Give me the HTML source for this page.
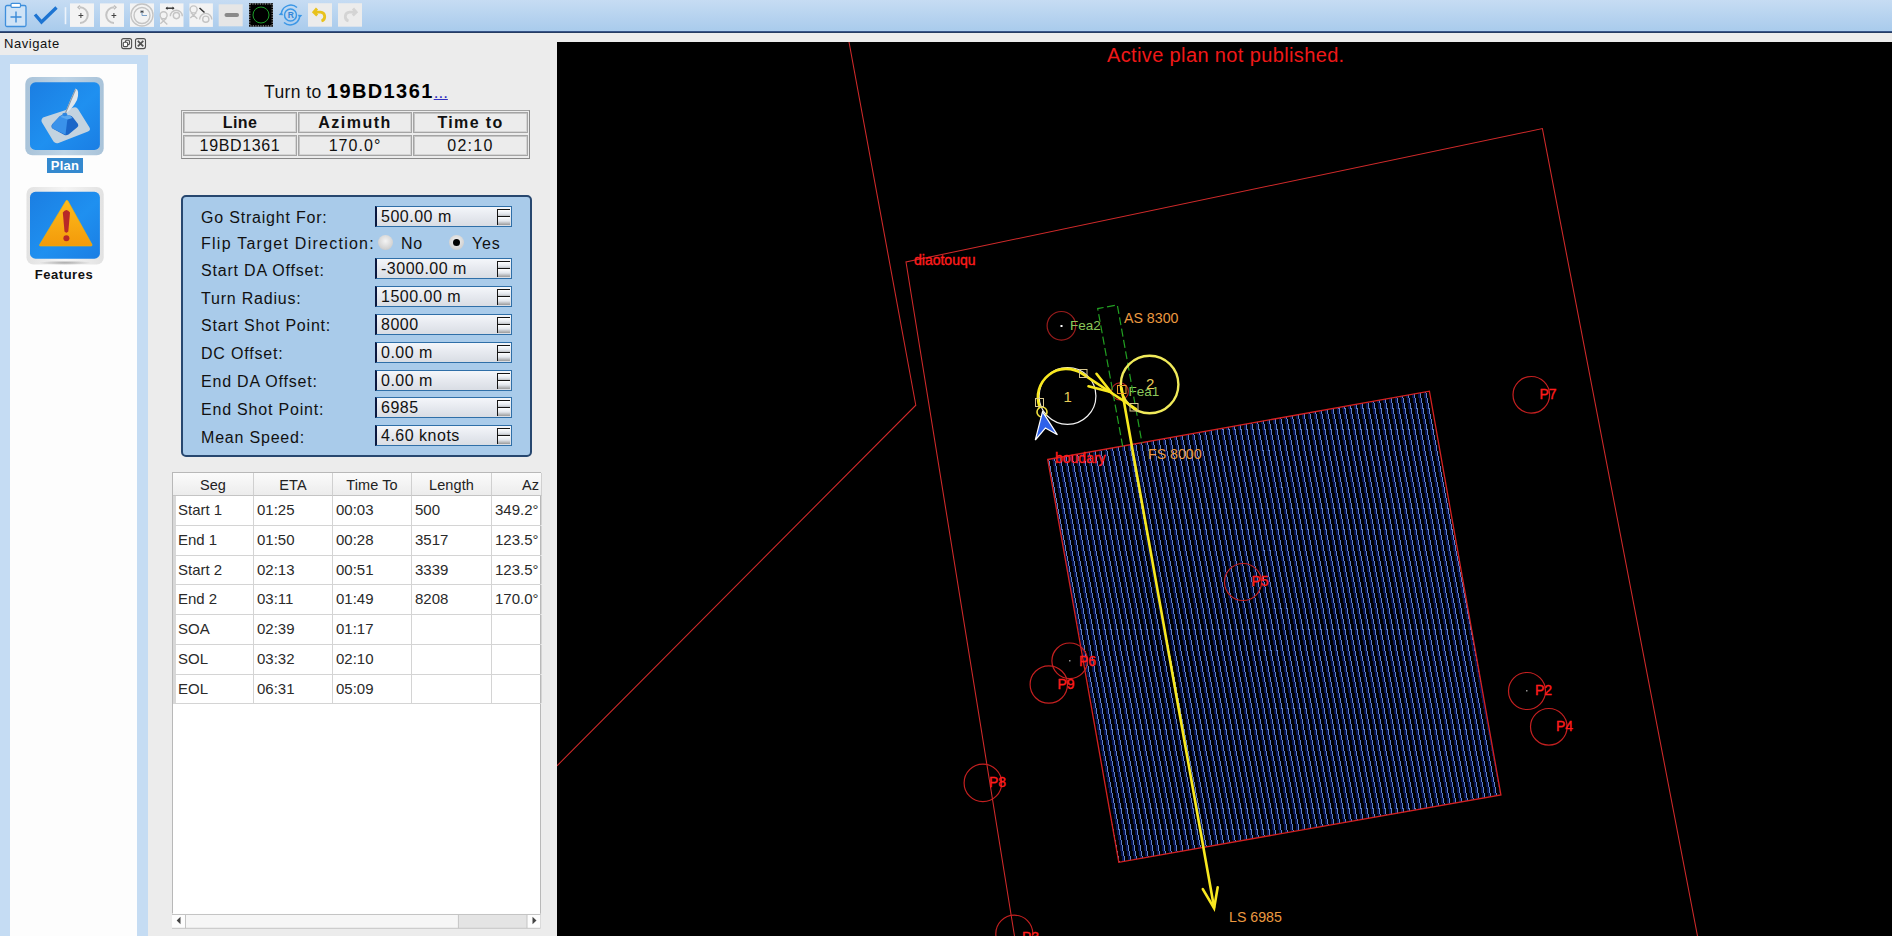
<!DOCTYPE html>
<html><head><meta charset="utf-8"><title>Navigate</title>
<style>
*{box-sizing:border-box;margin:0;padding:0}
html,body{width:1892px;height:936px;overflow:hidden;background:#ececec;font-family:"Liberation Sans",sans-serif;color:#000}
.a{position:absolute}
#tb{left:0;top:0;width:1892px;height:31px;background:linear-gradient(#c6dcf3,#a9cbec);border-bottom:0}
#tbl{left:0;top:31px;width:1892px;height:2px;background:linear-gradient(#40609a,#1c3050)}
.tbtn{position:absolute;top:3px;width:24px;height:24px;background:#f2f2f2}
#navt{left:4px;top:36px;font-size:13px;letter-spacing:0.55px;color:#111}
#side{left:0;top:55px;width:148px;height:881px;background:#c5dcf3}
#sidew{left:10px;top:64px;width:127px;height:872px;background:#fdfdfd}
.ico{position:absolute;left:25px;width:79px;height:79px;border-radius:7px;background:linear-gradient(#b8cfe3,#a6bfd8)}
.ico .in{position:absolute;left:4px;top:5px;width:71px;height:68px;border-radius:6px;background:linear-gradient(160deg,#1b7fe3,#1f8eef 60%,#1a80e4)}
#plabel{left:47px;top:158px;width:36px;height:15px;background:#3489cf;color:#fff;font-weight:bold;font-size:13px;line-height:15px;text-align:center;letter-spacing:0.3px}
#flabel{left:30px;top:267px;width:68px;text-align:center;font-weight:bold;font-size:13px;letter-spacing:0.55px;color:#111}
#map{left:557px;top:42px;width:1335px;height:894px;background:#000}
#turn{left:264px;top:80px;width:300px;text-align:left;white-space:nowrap}
#turn .t1{font-size:17.5px;letter-spacing:0.4px;color:#111}
#turn .t2{font-size:20px;font-weight:bold;letter-spacing:1.4px}
#turn .t3{font-size:17px;color:#3030c0;text-decoration:underline}
#ltab{left:181px;top:110px;width:349px;height:49px;border:1px solid #a0a0a0;border-right-color:#888;border-bottom-color:#888}
.lc{position:absolute;border:1px solid #a4a4a4;box-shadow:inset 1px 1px 0 #c4c4c4,inset -1px -1px 0 #d4d4d4;text-align:center;font-size:16px;letter-spacing:0.65px;color:#111}
.lc.h{font-weight:bold;letter-spacing:0.4px}
#grp{left:181px;top:195px;width:351px;height:262px;border:2px solid #27476f;border-radius:5px;background:#a9cbea}
.lbl{position:absolute;left:201px;font-size:16px;letter-spacing:0.8px;color:#111}
.spin{position:absolute;left:375px;width:137px;height:21px;border:1px solid #2f6fa8;border-left:2px solid #0a1840;background:linear-gradient(#f4f6fa,#e6e9ef 50%,#d9dde4);font-size:16px;letter-spacing:0.5px;padding-left:4px;line-height:19px;color:#111}
.spin .sb{position:absolute;right:2px;top:2px;width:12.5px;height:15px}
.spin .sb:before,.spin .sb:after{content:"";position:absolute;left:0;width:12.5px;height:7.5px;border-top:1.2px solid #151515;border-left:1.3px solid #151515;background:linear-gradient(#fff,#e2e6ec 50%,#9a9a9a)}
.spin .sb:before{top:0}.spin .sb:after{top:7.3px}
.radio{position:absolute;top:235px;width:15px;height:15px;border-radius:50%;background:radial-gradient(circle at 50% 40%,#f4f4f4,#d0d0d0 70%,#b8b8b8)}
#stab{left:172px;top:472px;width:369px;height:456px;border:1px solid #b8b8b8;background:#fff}
.sh{position:absolute;top:0;height:23.3px;background:linear-gradient(#fbfbfb,#ececec);border-right:1px solid #d0d0d0;border-bottom:1px solid #c4c4c4;text-align:center;font-size:14.5px;line-height:24.5px;letter-spacing:0.1px;color:#222}
.sr{position:absolute;left:2px;width:366px;height:29.73px;border-bottom:1px solid #d4d4d4}
.sc{position:absolute;top:0;height:28.73px;border-right:1px solid #d4d4d4;font-size:15px;line-height:28.9px;padding-left:3px;letter-spacing:0;color:#2a2a2a}
#hsb{left:172px;top:913px;width:369px;height:15px;border-top:1px solid #c0c0c0;background:linear-gradient(#fff,#f4f4f4)}

</style></head><body>
<div id="tb" class="a"></div>
<div id="tbl" class="a"></div>
<svg class="a" style="left:0;top:0" width="370" height="31" viewBox="0 0 370 31">
<g>
<rect x="5.5" y="5.5" width="20.5" height="21" rx="1.5" fill="#cfe3f6" stroke="#3f8fdc" stroke-width="1.3"/>
<rect x="11" y="3.3" width="9.5" height="4" rx="1" fill="#fff" stroke="#3f8fdc" stroke-width="1.2"/>
<path d="M16 11.5V22.5M10.5 17H21.5" stroke="#3a8ad8" stroke-width="1.4"/>
</g>
<path d="M35 14.5L41.5 22L56.5 7.5" fill="none" stroke="#1d74d2" stroke-width="3.3"/>
<rect x="64.7" y="7.2" width="1.6" height="17" fill="#edf3fb"/>
<rect x="70" y="3.4" width="24" height="23.5" fill="#f3f3f3"/>
<rect x="100" y="3.4" width="24" height="23.5" fill="#f3f3f3"/>
<rect x="130" y="3.4" width="24" height="23.5" fill="#f3f3f3"/>
<rect x="160" y="3.4" width="23.5" height="23.5" fill="#f3f3f3"/>
<rect x="189.4" y="3.4" width="23.5" height="23.5" fill="#f3f3f3"/>
<g fill="none" stroke="#c4c4c4" stroke-width="1.4">
<path d="M80 7.3A7.7 7.7 0 1 1 80 22.9" stroke-width="2"/>
<path d="M114 7.3A7.7 7.7 0 1 0 114 22.9" stroke-width="2"/>
<circle cx="142" cy="15" r="11"/>
<circle cx="142" cy="15.5" r="8"/>
<circle cx="163.6" cy="15.3" r="3.5"/><path d="M160.8 18.3L167.3 24.5M166.4 18.3L160.3 23.8M170.3 16.3A6 6 0 0 1 182.3 16.3"/><circle cx="176.4" cy="15.6" r="3.1"/>
<circle cx="193.6" cy="9.4" r="3.5"/><path d="M190.8 12.4L197.3 18.8M196.4 12.4L190.3 18M199.6 19.5A6 6 0 0 1 211.8 19.5"/><circle cx="205.8" cy="19.2" r="3.1"/>
</g>
<path d="M80 5.5L78 7.3L80 9.2M114 5.5L116 7.3L114 9.2" fill="none" stroke="#bdbdbd" stroke-width="1.4"/>
<path d="M78.5 15.5h4.8M80.9 13v5M111.5 15.5h4.8M113.9 13v5" stroke="#444" stroke-width="1"/>
<path d="M142 15.5V10.5M142 15.5H147" stroke="#7aa0c8" stroke-width="1"/>
<path d="M141 10.5V13M143 10.5V13M141 11.5H143" stroke="#333" stroke-width="0.8"/>
<path d="M166.5 8.2H173.5" stroke="#333" stroke-width="1.4"/><path d="M165.5 8.2L167.5 6.5V10ZM174.5 8.2L172.5 6.5V10Z" fill="#333"/>
<path d="M199.5 8L204.5 12.5" stroke="#333" stroke-width="1.5"/>
<rect x="218.7" y="4.3" width="24" height="22" fill="#e6e6e6"/>
<rect x="224.5" y="13" width="14.5" height="4" rx="2" fill="#8a8a8a"/>
<rect x="249" y="3.2" width="24" height="23.5" fill="#000"/>
<rect x="249.8" y="4" width="22.4" height="21.9" fill="none" stroke="#ddd" stroke-width="0.8" stroke-dasharray="1.2,1.3"/>
<circle cx="261" cy="15" r="8" fill="none" stroke="#1c9c28" stroke-width="1"/>
<g fill="none" stroke="#3b97e6" stroke-width="1.5">
<circle cx="290.5" cy="15" r="6"/>
<path d="M281.5 12.5A9.5 9.5 0 0 1 297 7.5M299.5 17.5A9.5 9.5 0 0 1 284 22.5"/>
</g>
<path d="M278.7 15l3-3.5l1.4 3.8zM302.3 15l-3 3.5l-1.4-3.8z" fill="#3b97e6"/>
<text x="287.7" y="18.4" font-family="Liberation Sans" font-weight="bold" font-size="8.5" fill="#2f86d8">R</text>
<rect x="308" y="3.2" width="24" height="23.5" fill="#ececec"/>
<path d="M317 8.5L313.8 12.2L317.2 15.5M314.5 12.2H320.5A4.5 4.5 0 0 1 321.5 21" fill="none" stroke="#e8c21c" stroke-width="2.8"/>
<rect x="338" y="3.2" width="24" height="23.5" fill="#ececec"/>
<path d="M353 8.5L356.2 12.2L352.8 15.5M355.5 12.2H349.5A4.5 4.5 0 0 0 348.5 21" fill="none" stroke="#d4d4d4" stroke-width="2.8"/>
</svg>
<div id="navt" class="a">Navigate</div>
<svg class="a" style="left:115px;top:33px" width="35" height="20" viewBox="115 33 35 20">
<g fill="none" stroke="#505050" stroke-width="1.1">
<rect x="121.6" y="38.6" width="10" height="10" rx="2"/>
<rect x="135.5" y="38.6" width="10" height="10" rx="2"/>
<rect x="125.5" y="40.3" width="4" height="4.3" rx="1"/>
<rect x="123.3" y="42.3" width="4.3" height="4.3" rx="1" fill="#fff"/>
</g>
<path d="M137.8 40.9L143.3 46.3M143.3 40.9L137.8 46.3" stroke="#505050" stroke-width="1.7"/>
</svg>
<div id="side" class="a"></div>
<div id="sidew" class="a"></div>
<svg class="a" style="left:20px;top:70px" width="90" height="200" viewBox="20 70 90 200">
<defs>
<linearGradient id="fr" x1="0" x2="1"><stop offset="0" stop-color="#a9c3d9"/><stop offset="0.5" stop-color="#bed4e6"/><stop offset="1" stop-color="#a9c3d9"/></linearGradient>
<linearGradient id="fr2" x1="0" x2="1"><stop offset="0" stop-color="#e2e2e2"/><stop offset="0.5" stop-color="#f4f4f4"/><stop offset="1" stop-color="#e2e2e2"/></linearGradient>
<radialGradient id="sh" cx="0.5" cy="0.5" r="0.5"><stop offset="0" stop-color="#a8a8a8"/><stop offset="1" stop-color="#a8a8a8" stop-opacity="0"/></radialGradient>
<linearGradient id="bl" x1="0" y1="0" x2="1" y2="1"><stop offset="0" stop-color="#1b7ee2"/><stop offset="0.55" stop-color="#1f90f0"/><stop offset="1" stop-color="#1a7ee4"/></linearGradient>
<linearGradient id="or" x1="0" y1="0" x2="0" y2="1"><stop offset="0" stop-color="#fdbb1c"/><stop offset="1" stop-color="#f39a0a"/></linearGradient>
</defs>
<rect x="25.3" y="77" width="78.4" height="78.2" rx="7" fill="url(#fr)"/>
<rect x="30" y="82.3" width="69.9" height="67.6" rx="5.5" fill="url(#bl)"/>
<path d="M43 117.5Q40.5 120 42 122.5L53.5 141.5Q55.5 144 58.5 143L88 131.5Q91 130 89.5 127.5L78 109Q76.5 106.5 73.5 107.5Z" fill="#c3d3e0"/>
<path d="M75.5 88.5Q80 90 77 100Q73 108 67 112.5L66 111Q70 100 75.5 88.5Z" fill="#dfe6ec"/>
<path d="M75.5 89.5L65.5 113" stroke="#8a98a6" stroke-width="1.1"/>
<path d="M51.5 127Q51 125.5 52.5 124L59.5 116.5Q61 115 63 115L70 115.5Q72 116 73 117.5L78 124Q79 126 77 127.5L68.5 134.5Q66.5 135.8 64.5 135L53 128.8Q51.7 128 51.5 127Z" fill="#1a66c8"/>
<path d="M52.5 124L59.5 116.5Q61 115 63 115L67.5 118.5L65.5 134.8L53 128.8Q51.3 127.5 52.5 124Z" fill="#3a92ea"/>
<path d="M60.5 117L63 115L70 115.5L72.5 118L67.5 119.5Z" fill="#5aa8f0"/>
<ellipse cx="64.8" cy="114.5" rx="2.6" ry="1.8" fill="#2e86e0"/>
<rect x="26.5" y="187" width="77.2" height="77.6" rx="7" fill="url(#fr2)"/>
<ellipse cx="65" cy="262.8" rx="26" ry="2.2" fill="url(#sh)"/>
<rect x="30" y="191.8" width="69.9" height="66.9" rx="5.5" fill="url(#bl)"/>
<path d="M66.1 200.5Q67 200 68 201L92 244.5Q92.5 246 91 246H40.5Q39 246 39.7 244.5Z" fill="url(#or)" stroke="#f5b400" stroke-width="0.6"/>
<path d="M62.8 212.5Q66.3 207.5 70 212.5L68.3 231.5Q66.3 233.8 64.5 231.5Z" fill="#b82828"/>
<circle cx="66.4" cy="238.2" r="3" fill="#b82828"/>
</svg>
<div id="plabel" class="a">Plan</div>
<div id="flabel" class="a">Features</div>

<div id="turn" class="a"><span class="t1">Turn to </span><span class="t2">19BD1361</span><span class="t3">...</span></div>
<div id="ltab" class="a"></div>
<div class="lc h" style="left:183px;top:112px;width:114px;height:21px;line-height:20.8px">Line</div>
<div class="lc h" style="left:298px;top:112px;width:114px;height:21px;line-height:20.8px;letter-spacing:1.5px">Azimuth</div>
<div class="lc h" style="left:413px;top:112px;width:115px;height:21px;line-height:20.8px;letter-spacing:1.35px">Time to</div>
<div class="lc" style="left:183px;top:135px;width:114px;height:21px;line-height:20.8px">19BD1361</div>
<div class="lc" style="left:298px;top:135px;width:114px;height:21px;line-height:20.8px;letter-spacing:1.05px">170.0°</div>
<div class="lc" style="left:413px;top:135px;width:115px;height:21px;line-height:20.8px;letter-spacing:1.3px">02:10</div>

<div id="grp" class="a"></div>
<div class="lbl" style="top:208.5px">Go Straight For:</div>
<div class="lbl" style="top:234.5px;letter-spacing:1.25px">Flip Target Direction:</div>
<div class="lbl" style="top:261.5px">Start DA Offset:</div>
<div class="lbl" style="top:289.5px">Turn Radius:</div>
<div class="lbl" style="top:316.5px">Start Shot Point:</div>
<div class="lbl" style="top:344.5px">DC Offset:</div>
<div class="lbl" style="top:372.5px">End DA Offset:</div>
<div class="lbl" style="top:400.5px">End Shot Point:</div>
<div class="lbl" style="top:428.5px">Mean Speed:</div>
<div class="spin" style="top:206px">500.00 m<div class="sb"></div></div>
<div class="radio" style="left:378px"></div>
<div class="lbl" style="left:401px;top:234.5px">No</div>
<div class="radio" style="left:449px"><div style="position:absolute;left:4px;top:4px;width:7px;height:7px;border-radius:50%;background:#000"></div></div>
<div class="lbl" style="left:472px;top:234.5px">Yes</div>
<div class="spin" style="top:258px">-3000.00 m<div class="sb"></div></div>
<div class="spin" style="top:286px">1500.00 m<div class="sb"></div></div>
<div class="spin" style="top:314px">8000<div class="sb"></div></div>
<div class="spin" style="top:342px">0.00 m<div class="sb"></div></div>
<div class="spin" style="top:370px">0.00 m<div class="sb"></div></div>
<div class="spin" style="top:397px">6985<div class="sb"></div></div>
<div class="spin" style="top:425px">4.60 knots<div class="sb"></div></div>

<div id="stab" class="a">
<div class="sh" style="left:0;width:81px">Seg</div>
<div class="sh" style="left:81px;width:79px">ETA</div>
<div class="sh" style="left:160px;width:79px">Time To</div>
<div class="sh" style="left:239px;width:80px">Length</div>
<div class="sh" style="left:319px;width:50px;text-align:right;padding-right:2px">Az</div>
<div style="position:absolute;left:0;top:23.3px;width:2.5px;height:208px;background:#d8d8d8"></div>
<div class="sr" style="top:23.30px"><div class="sc" style="left:0px;width:79px">Start 1</div><div class="sc" style="left:79px;width:79px">01:25</div><div class="sc" style="left:158px;width:79px">00:03</div><div class="sc" style="left:237px;width:80px">500</div><div class="sc" style="left:317px;width:50px">349.2°</div></div>
<div class="sr" style="top:53.03px"><div class="sc" style="left:0px;width:79px">End 1</div><div class="sc" style="left:79px;width:79px">01:50</div><div class="sc" style="left:158px;width:79px">00:28</div><div class="sc" style="left:237px;width:80px">3517</div><div class="sc" style="left:317px;width:50px">123.5°</div></div>
<div class="sr" style="top:82.76px"><div class="sc" style="left:0px;width:79px">Start 2</div><div class="sc" style="left:79px;width:79px">02:13</div><div class="sc" style="left:158px;width:79px">00:51</div><div class="sc" style="left:237px;width:80px">3339</div><div class="sc" style="left:317px;width:50px">123.5°</div></div>
<div class="sr" style="top:112.49px"><div class="sc" style="left:0px;width:79px">End 2</div><div class="sc" style="left:79px;width:79px">03:11</div><div class="sc" style="left:158px;width:79px">01:49</div><div class="sc" style="left:237px;width:80px">8208</div><div class="sc" style="left:317px;width:50px">170.0°</div></div>
<div class="sr" style="top:142.22px"><div class="sc" style="left:0px;width:79px">SOA</div><div class="sc" style="left:79px;width:79px">02:39</div><div class="sc" style="left:158px;width:79px">01:17</div><div class="sc" style="left:237px;width:80px"></div><div class="sc" style="left:317px;width:50px"></div></div>
<div class="sr" style="top:171.95px"><div class="sc" style="left:0px;width:79px">SOL</div><div class="sc" style="left:79px;width:79px">03:32</div><div class="sc" style="left:158px;width:79px">02:10</div><div class="sc" style="left:237px;width:80px"></div><div class="sc" style="left:317px;width:50px"></div></div>
<div class="sr" style="top:201.68px"><div class="sc" style="left:0px;width:79px">EOL</div><div class="sc" style="left:79px;width:79px">06:31</div><div class="sc" style="left:158px;width:79px">05:09</div><div class="sc" style="left:237px;width:80px"></div><div class="sc" style="left:317px;width:50px"></div></div>

</div>
<svg class="a" style="left:172px;top:913px" width="369" height="16" viewBox="172 913 369 16">
<rect x="172" y="913.5" width="368.5" height="15" fill="#fdfdfd"/>
<rect x="186" y="914.5" width="272" height="13.5" fill="#f6f6f6"/>
<rect x="458.4" y="914.5" width="68.6" height="13.5" fill="#e4e4e4"/>
<path d="M172 914.5H540.5M185.5 914.5V928.3M458.4 914.5V928.3M527 914.5V928.3M172 928.3H540.5" stroke="#c4c4c4" stroke-width="1"/>
<path d="M176.7 920.5L180.5 916.8V924.2Z" fill="#444"/>
<path d="M536.5 920.5L532.5 916.8V924.2Z" fill="#444"/>
</svg>

<svg id="map" class="a" width="1335" height="894" viewBox="557 42 1335 894">
<defs><clipPath id="hc"><polygon points="1047.7,459.5 1429.4,391.2 1500.9,794.9 1118.8,862.3"/></clipPath></defs>
<g fill="none" stroke="#d02a2a" stroke-width="1.05">
<polyline points="849,42 915.8,405.2 557,765.8"/>
<polyline points="1014.5,936 906,262 1542.4,128.6 1697.5,936"/>
</g>
<g clip-path="url(#hc)" fill="none">
<path d="M972.1 380L1065.2 870M978.1 380L1071.2 870M984.1 380L1077.2 870M990.1 380L1083.2 870M996.1 380L1089.2 870M1002.1 380L1095.2 870M1008.1 380L1101.2 870M1014.1 380L1107.2 870M1020.1 380L1113.2 870M1026.1 380L1119.2 870M1032.1 380L1125.2 870M1038.1 380L1131.2 870M1044.1 380L1137.2 870M1050.1 380L1143.2 870M1056.1 380L1149.2 870M1062.1 380L1155.2 870M1068.1 380L1161.2 870M1074.1 380L1167.2 870M1080.1 380L1173.2 870M1086.1 380L1179.2 870M1092.1 380L1185.2 870M1098.1 380L1191.2 870M1104.1 380L1197.2 870M1110.1 380L1203.2 870M1116.1 380L1209.2 870M1122.1 380L1215.2 870M1128.1 380L1221.2 870M1134.1 380L1227.2 870M1140.1 380L1233.2 870M1146.1 380L1239.2 870M1152.1 380L1245.2 870M1158.1 380L1251.2 870M1164.1 380L1257.2 870M1170.1 380L1263.2 870M1176.1 380L1269.2 870M1182.1 380L1275.2 870M1188.1 380L1281.2 870M1194.1 380L1287.2 870M1200.1 380L1293.2 870M1206.1 380L1299.2 870M1212.1 380L1305.2 870M1218.1 380L1311.2 870M1224.1 380L1317.2 870M1230.1 380L1323.2 870M1236.1 380L1329.2 870M1242.1 380L1335.2 870M1248.1 380L1341.2 870M1254.1 380L1347.2 870M1260.1 380L1353.2 870M1266.1 380L1359.2 870M1272.1 380L1365.2 870M1278.1 380L1371.2 870M1284.1 380L1377.2 870M1290.1 380L1383.2 870M1296.1 380L1389.2 870M1302.1 380L1395.2 870M1308.1 380L1401.2 870M1314.1 380L1407.2 870M1320.1 380L1413.2 870M1326.1 380L1419.2 870M1332.1 380L1425.2 870M1338.1 380L1431.2 870M1344.1 380L1437.2 870M1350.1 380L1443.2 870M1356.1 380L1449.2 870M1362.1 380L1455.2 870M1368.1 380L1461.2 870M1374.1 380L1467.2 870M1380.1 380L1473.2 870M1386.1 380L1479.2 870M1392.1 380L1485.2 870M1398.1 380L1491.2 870M1404.1 380L1497.2 870M1410.1 380L1503.2 870M1416.1 380L1509.2 870M1422.1 380L1515.2 870M1428.1 380L1521.2 870M1434.1 380L1527.2 870M1440.1 380L1533.2 870M1446.1 380L1539.2 870M1452.1 380L1545.2 870" stroke="#061454" stroke-width="2" shape-rendering="crispEdges"/>
<path d="M973.6 380L1066.7 870M979.6 380L1072.7 870M985.6 380L1078.7 870M991.6 380L1084.7 870M997.6 380L1090.7 870M1003.6 380L1096.7 870M1009.6 380L1102.7 870M1015.6 380L1108.7 870M1021.6 380L1114.7 870M1027.6 380L1120.7 870M1033.6 380L1126.7 870M1039.6 380L1132.7 870M1045.6 380L1138.7 870M1051.6 380L1144.7 870M1057.6 380L1150.7 870M1063.6 380L1156.7 870M1069.6 380L1162.7 870M1075.6 380L1168.7 870M1081.6 380L1174.7 870M1087.6 380L1180.7 870M1093.6 380L1186.7 870M1099.6 380L1192.7 870M1105.6 380L1198.7 870M1111.6 380L1204.7 870M1117.6 380L1210.7 870M1123.6 380L1216.7 870M1129.6 380L1222.7 870M1135.6 380L1228.7 870M1141.6 380L1234.7 870M1147.6 380L1240.7 870M1153.6 380L1246.7 870M1159.6 380L1252.7 870M1165.6 380L1258.7 870M1171.6 380L1264.7 870M1177.6 380L1270.7 870M1183.6 380L1276.7 870M1189.6 380L1282.7 870M1195.6 380L1288.7 870M1201.6 380L1294.7 870M1207.6 380L1300.7 870M1213.6 380L1306.7 870M1219.6 380L1312.7 870M1225.6 380L1318.7 870M1231.6 380L1324.7 870M1237.6 380L1330.7 870M1243.6 380L1336.7 870M1249.6 380L1342.7 870M1255.6 380L1348.7 870M1261.6 380L1354.7 870M1267.6 380L1360.7 870M1273.6 380L1366.7 870M1279.6 380L1372.7 870M1285.6 380L1378.7 870M1291.6 380L1384.7 870M1297.6 380L1390.7 870M1303.6 380L1396.7 870M1309.6 380L1402.7 870M1315.6 380L1408.7 870M1321.6 380L1414.7 870M1327.6 380L1420.7 870M1333.6 380L1426.7 870M1339.6 380L1432.7 870M1345.6 380L1438.7 870M1351.6 380L1444.7 870M1357.6 380L1450.7 870M1363.6 380L1456.7 870M1369.6 380L1462.7 870M1375.6 380L1468.7 870M1381.6 380L1474.7 870M1387.6 380L1480.7 870M1393.6 380L1486.7 870M1399.6 380L1492.7 870M1405.6 380L1498.7 870M1411.6 380L1504.7 870M1417.6 380L1510.7 870M1423.6 380L1516.7 870M1429.6 380L1522.7 870M1435.6 380L1528.7 870M1441.6 380L1534.7 870M1447.6 380L1540.7 870M1453.6 380L1546.7 870" stroke="#6080c4" stroke-width="1" shape-rendering="crispEdges"/>
</g>
<polygon points="1047.7,459.5 1429.4,391.2 1500.9,794.9 1118.8,862.3" fill="none" stroke="#d42020" stroke-width="1.3"/>
<g fill="none" stroke="#c42020" stroke-width="1.2">
<circle cx="1531.3" cy="394.8" r="18.3"/>
<circle cx="1527" cy="691" r="18.5"/>
<circle cx="1548.8" cy="726.8" r="18.3"/>
<circle cx="1243" cy="582" r="18.5"/>
<circle cx="1069.7" cy="660.8" r="17.8"/>
<circle cx="1048.8" cy="684.5" r="18.7"/>
<circle cx="982.9" cy="782.9" r="18.8"/>
<circle cx="1014.3" cy="933.7" r="18.5"/>
<circle cx="1061.4" cy="325.8" r="14.3" stroke="#9a1c1c"/>
<circle cx="1119.9" cy="391.4" r="8.5" stroke="#b02020"/>
</g>
<g fill="#ff1c1c" stroke="#ff1c1c" stroke-width="0.35" font-family="Liberation Sans" font-size="14">
<text x="914" y="264.5">diaotouqu</text>
<text x="1055" y="462.5">boudary</text>
<text x="1539.5" y="399.3">P7</text>
<text x="1535" y="695.3">P2</text>
<text x="1556" y="731">P4</text>
<text x="1251.5" y="586">P5</text>
<text x="1079" y="665.6">P6</text>
<text x="1057.5" y="688.6">P9</text>
<text x="989" y="787">P8</text>
<text x="1022" y="942">P3</text>
</g>
<g fill="#8cc85c" font-family="Liberation Sans" font-size="13.5">
<text x="1070" y="329.9">Fea2</text>
<text x="1128.5" y="395.8">Fea1</text>
</g>
<g fill="#ec9a40" font-family="Liberation Sans" font-size="14.2">
<text x="1124" y="322.5">AS 8300</text>
<text x="1148" y="459.4">FS 8000</text>
<text x="1229" y="921.5">LS 6985</text>
</g>
<g fill="none" stroke="#22a022" stroke-width="1.2" stroke-dasharray="8,3.5">
<polyline points="1122.7,446.4 1097.7,308.6 1117.3,305 1142,443"/>
</g>
<g fill="#fff"><rect x="1060.5" y="325" width="2" height="2"/></g>
<g fill="#909090"><rect x="1526" y="690" width="1.5" height="1.5"/><rect x="1069" y="660" width="1.5" height="1.5"/></g>
<circle cx="1067.5" cy="395.9" r="28.4" fill="none" stroke="#f4f4f4" stroke-width="1.2"/>
<circle cx="1149.6" cy="384.5" r="28.8" fill="none" stroke="#f0ea5a" stroke-width="2.4"/>
<g fill="#e8cc58" font-family="Liberation Sans" font-size="15">
<text x="1063.5" y="402">1</text>
<text x="1146" y="389.4">2</text>
</g>
<g fill="none" stroke="#f8e820" stroke-width="2.6" stroke-linecap="round">
<path d="M1039.6,407 A28.4,28.4 0 0 1 1082.1,373.7 L1136,409"/>
<path d="M1121.5,388 L1214,907"/>
<polyline points="1096.5,373.8 1110.9,392 1088.5,386.3"/>
<polyline points="1202.8,889.2 1214.1,908.2 1217.7,887.2"/>
</g>
<circle cx="1042" cy="412" r="5" fill="none" stroke="#f0e040" stroke-width="1.6"/>
<g fill="none" stroke="#d8c890" stroke-width="1">
<rect x="1079.5" y="369.5" width="7.5" height="8"/>
<rect x="1035.5" y="398.5" width="8" height="8"/>
<rect x="1130" y="403.5" width="8" height="7.5"/>
<rect x="1117.5" y="385.5" width="8.5" height="8" stroke="#f0a030"/>
</g>
<polygon points="1042.5,411.7 1057.4,434.8 1045.4,428 1035.3,440" fill="#2f62ea" stroke="#fff" stroke-width="1.2"/>
</svg>
<div class="a" style="left:1107px;top:44px;font-size:20px;letter-spacing:0.37px;color:#f01818">Active plan not published.</div>

</body></html>
